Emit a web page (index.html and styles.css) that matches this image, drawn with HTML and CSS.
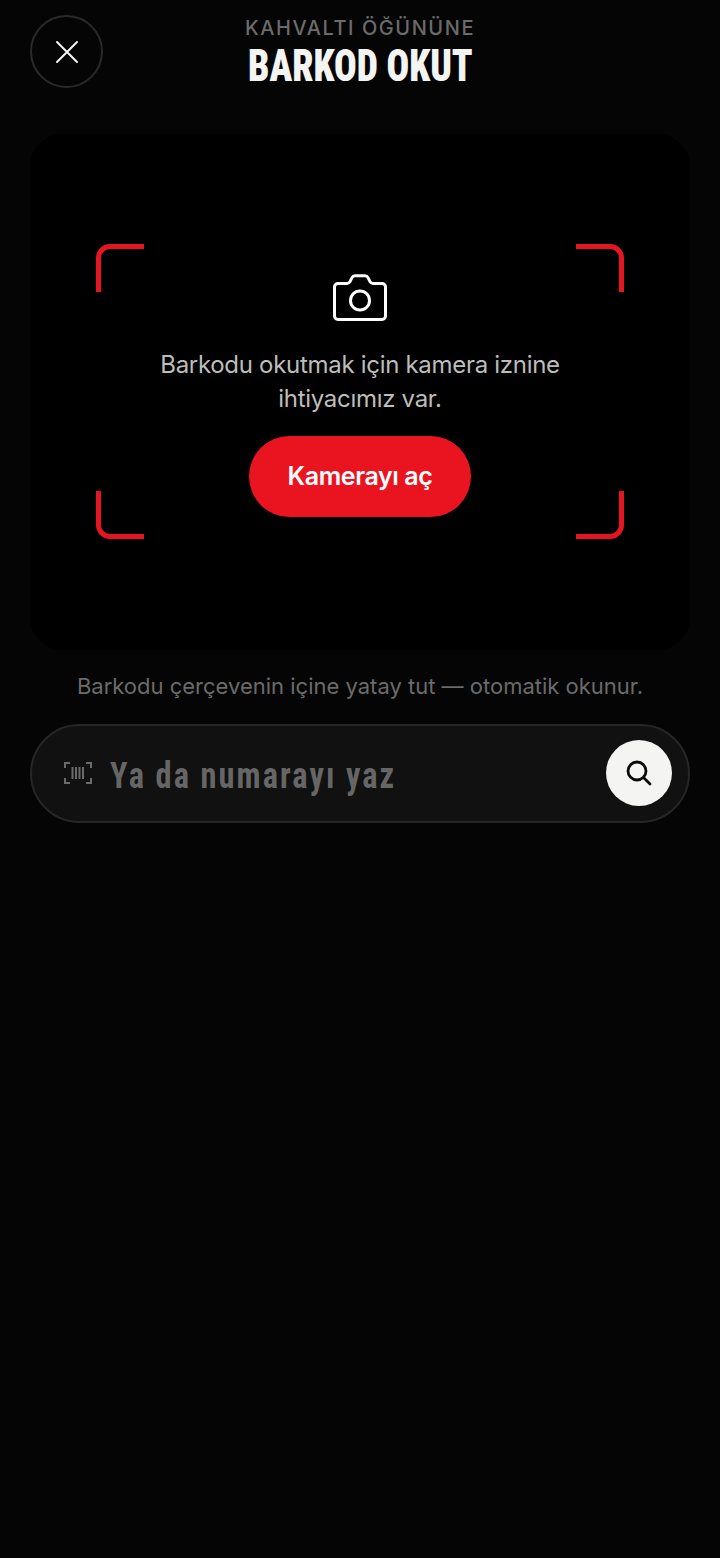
FILE: index.html
```html
<!DOCTYPE html>
<html lang="tr">
<head>
<meta charset="utf-8">
<title>Barkod Okut</title>
<link rel="stylesheet" href="styles.css">
</head>
<body>
<div class="page">
  <header class="header">
    <button class="close" aria-label="Kapat">
      <svg width="26" height="26" viewBox="0 0 26 26" fill="none" stroke="#f4f4f2" stroke-width="2" stroke-linecap="round"><path d="M3 3 L23 23 M23 3 L3 23"/></svg>
    </button>
    <div class="titles">
      <div class="eyebrow">KAHVALTI ÖĞÜNÜNE</div>
      <h1 class="title">BARKOD OKUT</h1>
    </div>
  </header>
  <section class="card">
    <div class="frame">
      <span class="corner tl"></span><span class="corner tr"></span>
      <span class="corner bl"></span><span class="corner br"></span>
      <svg class="camera" width="56" height="50" viewBox="0 0 56 50" fill="none" stroke="#fff" stroke-width="3" stroke-linejoin="round">
        <path d="M6 11.5 H15 C16.5 11.5 17.4 10.8 18 9.6 L20 5.6 C20.6 4.4 21.5 3.8 23 3.8 H33 C34.5 3.8 35.4 4.4 36 5.6 L38 9.6 C38.6 10.8 39.5 11.5 41 11.5 H50 C52 11.5 53.5 13 53.5 15 V44 C53.5 46 52 47.5 50 47.5 H6 C4 47.5 2.500 46 2.500 44 V15 C2.500 13 4 11.5 6 11.5 Z"/>
        <circle cx="28" cy="28.500" r="9.500"/>
      </svg>
      <p class="message">Barkodu okutmak için kamera iznine ihtiyacımız var.</p>
      <button class="open">Kameray&#305; aç</button>
    </div>
  </section>
  <p class="hint">Barkodu çerçevenin içine yatay tut — otomatik okunur.</p>
  <form class="search">
    <svg class="barcode" width="28" height="24" viewBox="0 0 28 24" fill="none" stroke="#6b6b6b" stroke-width="2">
      <path d="M1 7 V2 H6 M22 2 H27 V7 M1 17 V22 H6 M22 22 H27 V17"/>
      <path d="M8.500 6 V18 M12 6 V18 M15.500 6 V18 M19 6 V18"/>
    </svg>
    <span class="placeholder">Ya da numarayı yaz</span>
    <button class="go" type="button" aria-label="Ara">
      <svg width="28" height="28" viewBox="0 0 28 28" fill="none" stroke="#0a0a0a" stroke-width="2.800" stroke-linecap="round"><circle cx="12" cy="12" r="9"/><path d="M19 19 L25 25"/></svg>
    </button>
  </form>
</div>
</body>
</html>
```
FILE: styles.css
```css
* { box-sizing: border-box; }
html, body { margin: 0; height: 100%; }
body { background: #050505; font-family: "Inter", "Noto Sans", sans-serif; color: #f4f4f2; }
.page { width: 720px; height: 1558px; padding: 15px 30px 0; display: flex; flex-direction: column; }
.header { position: relative; height: 73px; display: flex; justify-content: center; }
.close { position: absolute; left: 0; top: 0; width: 73px; height: 73px; border-radius: 50%; background: transparent; border: 2px solid #2a2a2a; display: flex; align-items: center; justify-content: center; padding: 0; }
.titles { display: flex; flex-direction: column; align-items: center; }
.eyebrow { font-size: 20px; font-weight: 500; letter-spacing: 1.55px; line-height: 26px; color: #6b6b6b; }
.title { margin: 0; font-family: "Roboto Condensed", "Liberation Sans Narrow", "Roboto", sans-serif; font-weight: 900; font-size: 44px; line-height: 50px; letter-spacing: 0; color: #f4f4f2; font-stretch: 62%; transform: scaleX(0.855); }
.card { margin-top: 46px; height: 516px; background: #000; border-radius: 32px; padding: 110px 66px 111px; }
.frame { position: relative; height: 295px; padding: 28px 40px 0; display: flex; flex-direction: column; align-items: center; }
.corner { position: absolute; width: 48px; height: 48px; border: 0 solid #e61522; }
.tl { left: 0; top: 0; border-width: 5px 0 0 5px; border-top-left-radius: 14px; }
.tr { right: 0; top: 0; border-width: 5px 5px 0 0; border-top-right-radius: 14px; }
.bl { left: 0; bottom: 0; border-width: 0 0 5px 5px; border-bottom-left-radius: 14px; }
.br { right: 0; bottom: 0; border-width: 0 5px 5px 0; border-bottom-right-radius: 14px; }
.camera { display: block; }
.message { margin: 26px 0 0; width: 420px; text-align: center; font-size: 24px; line-height: 34px; letter-spacing: -0.3px; color: #bdbdbb; }
.open { margin-top: 20px; width: 222px; height: 81px; border: 0; border-radius: 41px; background: #ea1421; color: #fff; font-family: inherit; font-size: 25px; font-weight: 600; letter-spacing: -0.4px; padding: 0 0 2px; }
.hint { margin: 21px 0 0; text-align: center; font-size: 22px; line-height: 30px; letter-spacing: 0; color: #6b6b6b; }
.search { margin-top: 23px; height: 99px; border: 2px solid #262626; border-radius: 50px; background: #111; display: flex; align-items: center; padding: 0 16px 1px 32px; }
.barcode { flex: none; }
.placeholder { margin: 6px 0 0 18px; flex: 1; font-family: "Roboto Condensed", "Liberation Sans Narrow", "Roboto", sans-serif; font-weight: 700; font-size: 36px; letter-spacing: 2.3px; color: #666; font-stretch: 75%; transform: scaleX(0.9); transform-origin: left center; }
.go { flex: none; width: 66px; height: 66px; border: 0; border-radius: 50%; background: #f4f4f2; display: flex; align-items: center; justify-content: center; padding: 0; }
```
